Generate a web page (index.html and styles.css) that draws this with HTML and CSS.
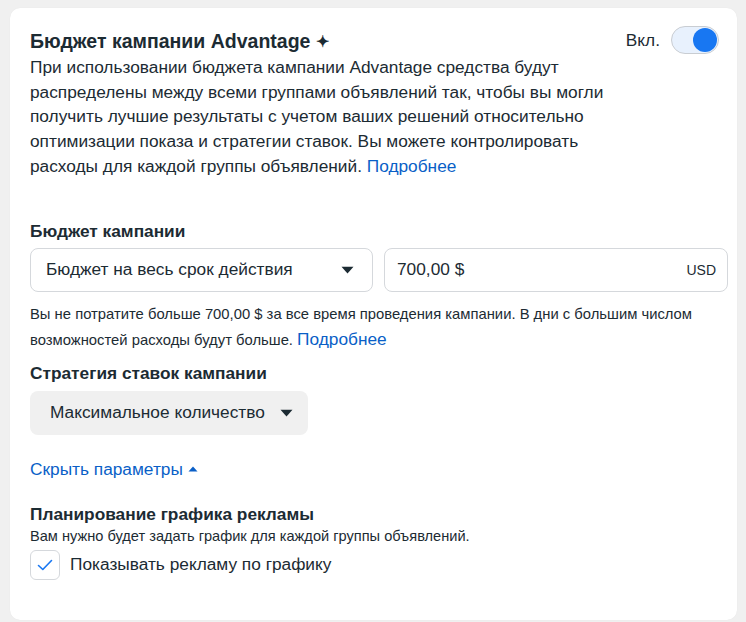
FILE: index.html
```html
<!DOCTYPE html>
<html lang="ru">
<head>
<meta charset="utf-8">
<link rel="stylesheet" href="styles.css">
</head>
<body>
<div class="card">
  <div class="head">
    <div class="head-text">
      <h2 class="title">Бюджет кампании Advantage <span class="spark">✦</span></h2>
      <p class="desc">При использовании бюджета кампании Advantage средства будут распределены между всеми группами объявлений так, чтобы вы могли получить лучшие результаты с учетом ваших решений относительно оптимизации показа и стратегии ставок. Вы можете контролировать расходы для каждой группы объявлений. <a class="link" href="#">Подробнее</a></p>
    </div>
    <div class="toggle-wrap">
      <span class="toggle-label">Вкл.</span>
      <span class="toggle"><span class="knob"></span></span>
    </div>
  </div>

  <div class="section budget">
    <div class="label">Бюджет кампании</div>
    <div class="row">
      <div class="select">
        <span>Бюджет на весь срок действия</span>
        <svg class="caret" width="13" height="8" viewBox="0 0 13 8"><path d="M0.5 0.8 L12.5 0.8 L6.5 7.5 Z" fill="#1c2b33"/></svg>
      </div>
      <div class="input">
        <span>700,00 $</span>
        <span class="cur">USD</span>
      </div>
    </div>
    <p class="help">Вы не потратите больше 700,00 $ за все время проведения кампании. В дни с большим числом возможностей расходы будут больше. <a class="link big" href="#">Подробнее</a></p>
  </div>

  <div class="section strategy">
    <div class="label">Стратегия ставок кампании</div>
    <div class="btn">
      <span>Максимальное количество</span>
      <svg class="caret" width="13" height="8" viewBox="0 0 13 8"><path d="M0.5 0.8 L12.5 0.8 L6.5 7.5 Z" fill="#1c2b33"/></svg>
    </div>
  </div>

  <a class="link hide" href="#">Скрыть параметры <svg width="10" height="6" viewBox="0 0 10 6"><path d="M0.5 5.5 L9.5 5.5 L5 0.5 Z" fill="#0a5fc7"/></svg></a>

  <div class="section sched">
    <div class="label">Планирование графика рекламы</div>
    <div class="small">Вам нужно будет задать график для каждой группы объявлений.</div>
    <label class="check">
      <span class="box"><svg width="16" height="12" viewBox="0 0 16 12"><path d="M1.5 6.5 L5.8 10.5 L14.5 1.5" fill="none" stroke="#1877f2" stroke-width="1.6" stroke-linecap="round" stroke-linejoin="round"/></svg></span>
      <span>Показывать рекламу по графику</span>
    </label>
  </div>
</div>
</body>
</html>
```

FILE: styles.css
```css
* { box-sizing: border-box; }
html, body { margin: 0; padding: 0; }
body {
  background: #f0f0f0;
  font-family: "Liberation Sans", Arial, sans-serif;
  color: #1c2b33;
  padding: 8px 9px 2px 10px;
  height: 622px;
}
.card {
  background: #fff;
  border-radius: 10px;
  padding: 22px 9px 0 20px;
  height: 612px;
  box-shadow: 0 0 1px rgba(0,0,0,0.08);
}
.head {
  display: flex;
  justify-content: space-between;
  align-items: flex-start;
}
.head-text { width: 580px; }
.title {
  margin: 0;
  font-size: 19.5px;
  font-weight: bold;
  line-height: 22px;
}
.spark { font-size: 16px; position: relative; top: -1px; }
.desc {
  margin: 1px 0 0 0;
  font-size: 17.3px;
  line-height: 24.7px;
}
.link { color: #0a5fc7; text-decoration: none; }
.toggle-wrap {
  display: flex;
  align-items: center;
  gap: 11px;
  margin-top: -4px;
  margin-right: 9px;
}
.toggle-label { font-size: 17.3px; }
.toggle {
  width: 48px;
  height: 28px;
  border-radius: 14px;
  background: #e8f1fd;
  border: 1px solid #c9cdd2;
  display: flex;
  align-items: center;
  justify-content: flex-end;
  padding: 1px;
}
.knob {
  width: 24px;
  height: 24px;
  border-radius: 50%;
  background: #1877f2;
}
.budget { margin-top: 42px; }
.label {
  font-size: 17.3px;
  font-weight: bold;
  line-height: 20px;
}
.row {
  display: flex;
  gap: 11px;
  margin-top: 7px;
}
.select, .input {
  height: 44px;
  border: 1px solid #d5d8dc;
  border-radius: 8px;
  display: flex;
  align-items: center;
  justify-content: space-between;
  font-size: 17.3px;
}
.select { width: 343px; padding: 0 18px 0 15px; }
.input { flex: 1; padding: 0 11px 0 12px; }
.cur { font-size: 14px; }
.help {
  margin: 10px 0 0 0;
  font-size: 14.8px;
  line-height: 25px;
}
.link.big { font-size: 17.3px; }
.strategy { margin-top: 10px; }
.btn {
  margin-top: 8px;
  width: 278px;
  height: 44px;
  background: #f0f0f0;
  border-radius: 8px;
  display: flex;
  align-items: center;
  justify-content: space-between;
  padding: 0 15px 0 20px;
  font-size: 17.3px;
}
.hide {
  display: inline-flex;
  align-items: center;
  gap: 5px;
  margin-top: 24px;
  font-size: 17.3px;
}
.sched { margin-top: 24px; }
.small {
  font-size: 14.6px;
  line-height: 16px;
  margin-top: 4px;
}
.check {
  display: flex;
  align-items: center;
  gap: 10px;
  margin-top: 6px;
  font-size: 17.3px;
}
.box {
  width: 30px;
  height: 30px;
  border: 1px solid #d5d8dc;
  border-radius: 6px;
  display: flex;
  align-items: center;
  justify-content: center;
}
```
